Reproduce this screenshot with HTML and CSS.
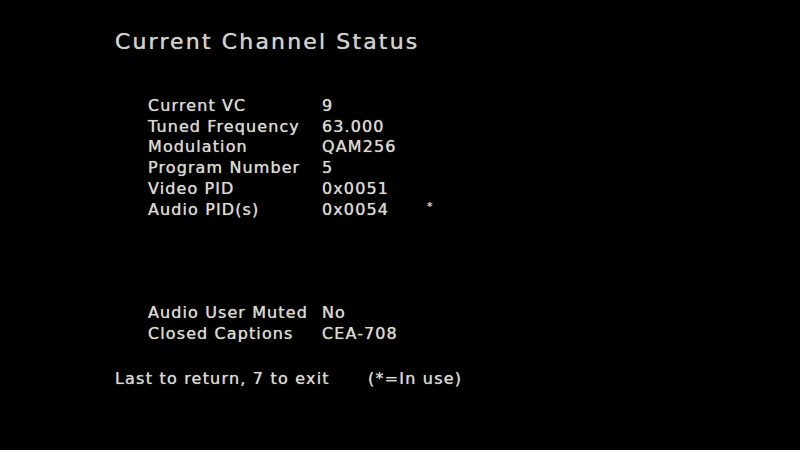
FILE: index.html
```html
<!DOCTYPE html>
<html>
<head>
<meta charset="utf-8">
<link rel="stylesheet" href="styles.css">
</head>
<body>
<div class="screen">
  <h1 class="title">Current Channel Status</h1>
  <div class="table">
    <div class="row"><span class="label">Current VC</span><span class="value">9</span></div>
    <div class="row"><span class="label">Tuned Frequency</span><span class="value">63.000</span></div>
    <div class="row"><span class="label">Modulation</span><span class="value">QAM256</span></div>
    <div class="row"><span class="label">Program Number</span><span class="value">5</span></div>
    <div class="row"><span class="label">Video PID</span><span class="value">0x0051</span></div>
    <div class="row"><span class="label">Audio PID(s)</span><span class="value">0x0054</span><span class="mark">*</span></div>
    <div class="spacer"></div>
    <div class="row"><span class="label">Audio User Muted</span><span class="value">No</span></div>
    <div class="row"><span class="label">Closed Captions</span><span class="value">CEA-708</span></div>
  </div>
  <div class="footer"><span class="hint">Last to return, 7 to exit</span><span class="legend">(*=In use)</span></div>
</div>
</body>
</html>
```
FILE: styles.css
```css
html, body {
  margin: 0;
  padding: 0;
  background: #000;
  width: 800px;
  height: 450px;
  overflow: hidden;
}
.screen {
  font-family: "DejaVu Sans", sans-serif;
  color: #d8d8d0;
  padding: 28px 0 0 115px;
  text-shadow: 0 0 0.8px rgba(216, 216, 208, 0.95);
}
.title {
  margin: 0;
  font-size: 22px;
  font-weight: normal;
  line-height: 28px;
  letter-spacing: 2.15px;
  color: #d0d0cc;
}
.table {
  margin: 40px 0 0 33px;
  font-size: 16px;
  line-height: 20.7px;
  letter-spacing: 1.1px;
}
.row {
  display: grid;
  grid-template-columns: 174px 104px auto;
}
.mark {
  font-size: 11px;
  line-height: 14px;
  align-self: start;
  padding-left: 1px;
}
.spacer {
  height: 82.8px;
}
.footer {
  margin-top: 25px;
  font-size: 16px;
  line-height: 20px;
  letter-spacing: 1.2px;
  display: flex;
}
.hint {
  width: 253px;
}
```
